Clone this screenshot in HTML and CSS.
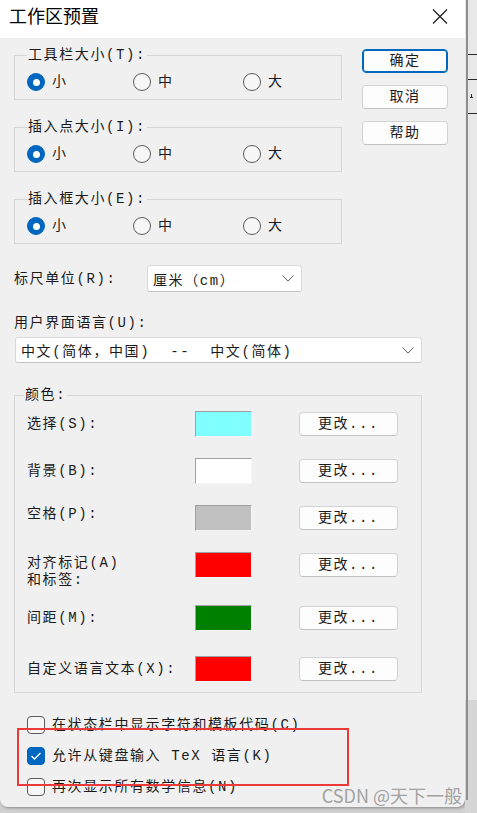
FILE: index.html
```html
<!DOCTYPE html>
<html lang="zh-CN">
<head>
<meta charset="utf-8">
<title>工作区预置</title>
<link rel="stylesheet" href="styles.css">
</head>
<body>
<div class="screen">
  <div class="window">
    <div class="titlebar">
      <span class="title">工作区预置</span>
      <svg class="close" width="16" height="15" viewBox="0 0 16 15"><path d="M1 0.5 L15 14.5 M15 0.5 L1 14.5" stroke="#1a1a1a" stroke-width="1.2" fill="none"/></svg>
    </div>
    <div class="body">
      <div class="top">
        <div class="groups">
          <fieldset class="group">
            <legend>工具栏大小(T):</legend>
            <div class="radios">
              <label class="opt"><span class="radio radio--on"></span>小</label>
              <label class="opt"><span class="radio"></span>中</label>
              <label class="opt"><span class="radio"></span>大</label>
            </div>
          </fieldset>
          <fieldset class="group">
            <legend>插入点大小(I):</legend>
            <div class="radios">
              <label class="opt"><span class="radio radio--on"></span>小</label>
              <label class="opt"><span class="radio"></span>中</label>
              <label class="opt"><span class="radio"></span>大</label>
            </div>
          </fieldset>
          <fieldset class="group">
            <legend>插入框大小(E):</legend>
            <div class="radios">
              <label class="opt"><span class="radio radio--on"></span>小</label>
              <label class="opt"><span class="radio"></span>中</label>
              <label class="opt"><span class="radio"></span>大</label>
            </div>
          </fieldset>
        </div>
        <div class="buttons">
          <button class="btn btn--default">确定</button>
          <button class="btn">取消</button>
          <button class="btn btn--help">帮助</button>
        </div>
      </div>

      <div class="ruler">
        <span class="ruler-label">标尺单位(R):</span>
        <div class="select select--ruler">
          <span>厘米（cm）</span>
          <svg class="chev" width="12" height="7" viewBox="0 0 12 7"><path d="M0.5 0.5 L6 6 L11.5 0.5" stroke="#606060" stroke-width="1" fill="none"/></svg>
        </div>
      </div>

      <div class="lang-label">用户界面语言(U):</div>
      <div class="select select--lang">
        <span class="pre">中文(简体，中国)  --  中文(简体)</span>
        <svg class="chev" width="12" height="7" viewBox="0 0 12 7"><path d="M0.5 0.5 L6 6 L11.5 0.5" stroke="#606060" stroke-width="1" fill="none"/></svg>
      </div>

      <fieldset class="group group--colors">
        <legend>颜色:</legend>
        <div class="crow">
          <span class="clabel">选择(S):</span>
          <span class="swatch swatch--cyan"></span>
          <button class="btn btn--change">更改...</button>
        </div>
        <div class="crow">
          <span class="clabel">背景(B):</span>
          <span class="swatch swatch--white"></span>
          <button class="btn btn--change">更改...</button>
        </div>
        <div class="crow">
          <span class="clabel clabel--high">空格(P):</span>
          <span class="swatch swatch--gray"></span>
          <button class="btn btn--change">更改...</button>
        </div>
        <div class="crow">
          <span class="clabel clabel--two">对齐标记(A)<br>和标签:</span>
          <span class="swatch swatch--red"></span>
          <button class="btn btn--change">更改...</button>
        </div>
        <div class="crow crow--far">
          <span class="clabel">间距(M):</span>
          <span class="swatch swatch--green"></span>
          <button class="btn btn--change">更改...</button>
        </div>
        <div class="crow crow--mid">
          <span class="clabel">自定义语言文本(X):</span>
          <span class="swatch swatch--red"></span>
          <button class="btn btn--change">更改...</button>
        </div>
      </fieldset>

      <div class="checks">
        <label class="check"><span class="cbox"></span>在状态栏中显示字符和模板代码(C)</label>
        <label class="check"><span class="cbox cbox--on"><svg width="12" height="10" viewBox="0 0 12 10"><path d="M1.5 5 L4.5 8 L10.5 2" stroke="#ffffff" stroke-width="1.3" fill="none"/></svg></span>允许从键盘输入 TeX 语言(K)</label>
        <label class="check"><span class="cbox"></span>再次显示所有数学信息(N)</label>
      </div>

      <div class="annot"></div>
      <div class="watermark">CSDN @天下一般</div>
    </div>
  </div>
  <div class="strip">
    <svg width="12" height="813" viewBox="0 0 12 813">
      <rect x="0" y="0" width="12" height="813" fill="#e8e8e8"/>
      <rect x="0" y="700" width="12" height="113" fill="#d6d6d6"/>
      <rect x="1" y="0" width="2" height="800" fill="#8e8e8e"/>
      <path d="M3 54.5 H12 M3 79.5 H12 M3 113.5 H12" stroke="#2a2a2a" stroke-width="1"/>
      <path d="M5 97.5 H8 M6.5 94 V97" stroke="#2a2a2a" stroke-width="1"/>
    </svg>
  </div>
</div>
</body>
</html>
```

FILE: styles.css
```css
* { box-sizing: border-box; }

html, body {
  margin: 0;
  padding: 0;
}

body {
  width: 477px;
  height: 813px;
  overflow: hidden;
  background: #d0d0d0;
  font-family: "Liberation Mono", "Noto Sans CJK SC", monospace;
  font-size: 14px;
  letter-spacing: 1.6px;
  color: #1b1b1b;
}

.screen {
  display: flex;
  align-items: flex-start;
  width: 477px;
  height: 813px;
}

.window {
  flex: none;
  width: 465px;
  height: 807px;
  background: #f0f0f0;
  border-radius: 0 0 8px 8px;
  box-shadow: 1px 1px 3px rgba(0, 0, 0, 0.35);
  overflow: hidden;
  display: flex;
  flex-direction: column;
}

.titlebar {
  flex: none;
  height: 38px;
  background: #ffffff;
  display: flex;
  align-items: flex-start;
  padding: 4px 17px 0 9px;
}

.title {
  font-family: "Noto Sans CJK SC", sans-serif;
  font-size: 18px;
  line-height: 22px;
  letter-spacing: 0;
  color: #000;
}

.close {
  margin-left: auto;
  margin-top: 5px;
}

.body {
  position: relative;
  flex: 1;
  padding: 8px 17px 0 14px;
}

.top {
  display: flex;
  align-items: flex-start;
}

.groups {
  flex: none;
  width: 328px;
}

.group {
  margin: 0;
  min-width: 0;
  padding: 8px 0 7px 12px;
  border: 1px solid #d6d6d6;
}

.group + .group {
  margin-top: 18px;
}

legend {
  padding: 0 1px;
  line-height: 18px;
}

.radios {
  display: flex;
  align-items: center;
  height: 20px;
}

.opt {
  display: flex;
  align-items: center;
  gap: 7px;
  line-height: 20px;
}

.opt:nth-child(1) { width: 106px; }
.opt:nth-child(2) { width: 110px; }

.radio {
  flex: none;
  width: 18px;
  height: 18px;
  border-radius: 50%;
  border: 1px solid #5c5c5c;
  background: #f7f7f7;
  display: flex;
  align-items: center;
  justify-content: center;
}

.radio--on {
  background: #0067c0;
  border-color: #0067c0;
}

.radio--on::after {
  content: "";
  width: 7px;
  height: 7px;
  border-radius: 50%;
  background: #ffffff;
}

.buttons {
  flex: none;
  width: 86px;
  margin-left: 20px;
  padding-top: 3px;
  display: flex;
  flex-direction: column;
}

.btn {
  font: inherit;
  letter-spacing: inherit;
  color: inherit;
  height: 24px;
  padding: 0;
  background: #fdfdfd;
  border: 1px solid #d3d3d3;
  border-bottom-color: #c2c2c2;
  border-radius: 4px;
  display: flex;
  align-items: center;
  justify-content: center;
  line-height: 20px;
}

.btn--default {
  border-color: #0067c0;
  box-shadow: inset 0 0 0 1px #0067c0;
}

.buttons .btn + .btn { margin-top: 12px; }
.buttons .btn--help { margin-top: 14px; }

.ruler {
  display: flex;
  align-items: center;
  margin-top: 21px;
}

.ruler-label {
  width: 133px;
  line-height: 18px;
}

.select {
  background: #ffffff;
  border: 1px solid #d9d9d9;
  border-bottom-color: #c4c4c4;
  border-radius: 3px;
  display: flex;
  align-items: center;
  justify-content: space-between;
  padding: 0 7px 0 5px;
}

.select--ruler {
  width: 155px;
  height: 27px;
}

.lang-label {
  margin-top: 22px;
  line-height: 18px;
}

.select--lang {
  margin-top: 5px;
  margin-left: 1px;
  width: 407px;
  height: 26px;
}

.pre { white-space: pre; }

.chev { flex: none; }

.group--colors {
  margin-top: 23px;
  width: 408px;
  padding: 7px 0 10px 12px;
}

.group--colors legend {
  margin-left: -3px;
}

.crow {
  display: flex;
  align-items: flex-start;
  height: 26px;
}

.crow + .crow { margin-top: 21px; }
.crow + .crow--far { margin-top: 27px; }
.crow + .crow--mid { margin-top: 25px; }

.clabel {
  width: 168px;
  flex: none;
  line-height: 18px;
  padding-top: 4px;
  white-space: nowrap;
}

.clabel--high { padding-top: 0; }
.clabel--two { padding-top: 3px; line-height: 17px; }

.swatch {
  flex: none;
  width: 57px;
  height: 26px;
  border: 1px solid;
  border-color: #a0a0a0 #f6f6f6 #f6f6f6 #a0a0a0;
}

.swatch--cyan { background: #80ffff; }
.swatch--white { background: #ffffff; }
.swatch--gray { background: #c0c0c0; }
.swatch--red { background: #ff0000; }
.swatch--green { background: #008000; }

.btn--change {
  width: 99px;
  margin-left: 47px;
  margin-top: 1px;
}

.checks {
  margin-top: 23px;
  padding-left: 13px;
  display: flex;
  flex-direction: column;
  gap: 13px;
}

.check {
  display: flex;
  align-items: center;
  gap: 7px;
  height: 18px;
  line-height: 18px;
  white-space: nowrap;
}

.cbox {
  flex: none;
  width: 18px;
  height: 18px;
  border: 1px solid #5c5c5c;
  border-radius: 4px;
  background: #f6f6f6;
}

.cbox--on {
  background: #0067c0;
  border-color: #0067c0;
  display: flex;
  align-items: center;
  justify-content: center;
}

.annot {
  position: absolute;
  left: 17px;
  top: 690px;
  width: 332px;
  height: 58px;
  border: 2px solid #ec3a3a;
}

.watermark {
  position: absolute;
  right: 3px;
  top: 747px;
  font-family: "Noto Sans CJK SC", sans-serif;
  font-size: 18px;
  line-height: 20px;
  letter-spacing: 0;
  color: #a2a2a2;
}

.strip {
  flex: none;
  width: 12px;
  height: 813px;
}

.strip svg { display: block; }
```
